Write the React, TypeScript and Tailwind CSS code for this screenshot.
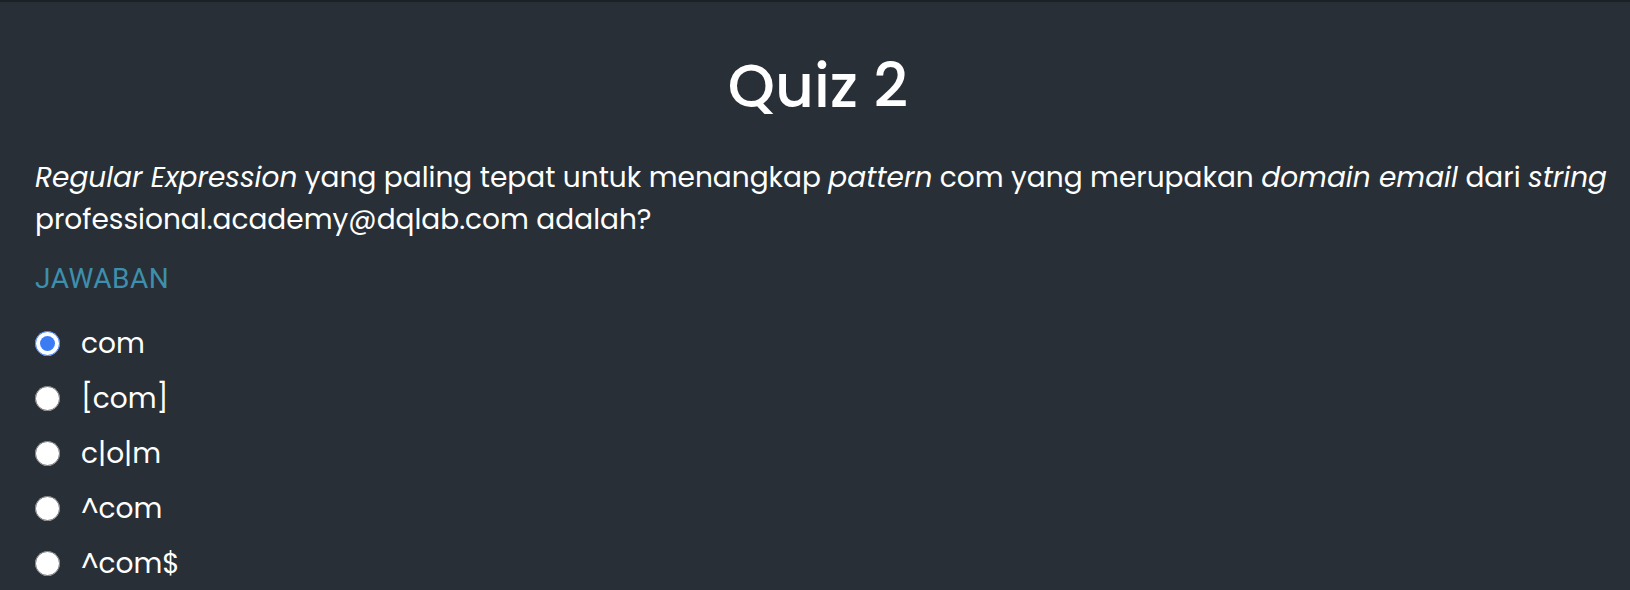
import React from "react";

const options = ["com", "[com]", "c|o|m", "^com", "^com$"];

export default function App() {
  return (
    <div className="min-h-[590px] w-full bg-[#282f36] border-t-2 border-[#1b2124] text-white">
      <div className="pl-[35px] pr-[15px] pt-[46px] font-['Poppins','DejaVu_Sans',sans-serif]">
        <h1 className="text-center text-[60px] leading-[76px] font-medium pr-[14px]">Quiz 2</h1>
        <p className="mt-[33px] text-[28px] leading-[42px]">
          <em>Regular Expression</em> yang paling tepat untuk menangkap <em>pattern</em> com yang merupakan{" "}
          <em>domain email</em> dari <em>string</em> professional.academy@dqlab.com adalah?
        </p>
        <div className="mt-[22px] text-[24px] leading-[32px] tracking-[0.5px] text-[#3e8fae] font-['Roboto',sans-serif]">
          <span className="text-[28px]">JAWABAN</span>
        </div>
        <div className="mt-[20px] flex flex-col">
          {options.map((o, i) => (
            <label key={o} className="flex items-center h-[55px] gap-[21px]">
              <input
                type="radio"
                name="q"
                defaultChecked={i === 0}
                className="w-[25px] h-[25px] m-0 accent-[#3b7cf5]"
              />
              <span className="text-[28px]">{o}</span>
            </label>
          ))}
        </div>
      </div>
    </div>
  );
}
